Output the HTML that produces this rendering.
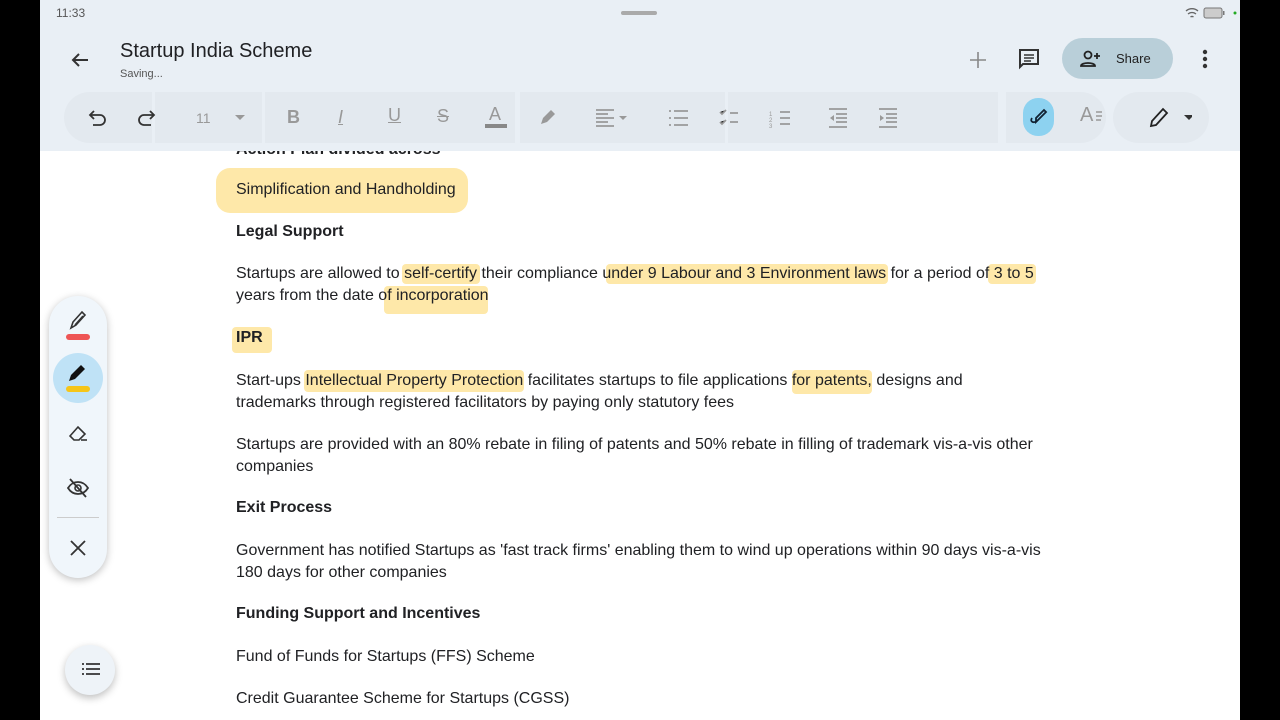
<!DOCTYPE html>
<html><head><style>
body{margin:0;width:1280px;height:720px;background:#000;position:relative;overflow:hidden;font-family:"Liberation Sans",Arial,sans-serif}
.app{position:absolute;left:40px;top:0;width:1200px;height:720px;background:#fff;overflow:hidden}
.hdr{position:absolute;left:0;top:0;width:1200px;height:151px;background:#e9eff5;z-index:2}
.t{position:absolute;white-space:nowrap}
.grp{position:absolute;top:92px;height:51px;background:#e3e9ef}
.doc{position:absolute;left:196px;font-size:16px;color:#202124;white-space:nowrap}
.hl{position:absolute;background:rgba(253,214,99,.55);border-radius:4px}
.ic{position:absolute}
</style></head><body>
<div class="app">
<div class="doc" style="top:141px;font-weight:bold">Action Plan divided across</div>
<div class="hdr">
<div class="t" style="left:16px;top:6px;font-size:12px;color:#555">11:33</div>
<div style="position:absolute;left:581px;top:11px;width:36px;height:4px;border-radius:2px;background:#aaa"></div>
<svg class="ic" style="left:1144px;top:6px" width="60" height="14"><path d="M2 5a9 9 0 0 1 12 0M4 8a6 6 0 0 1 8 0M6.5 11a2.5 2.5 0 0 1 3 0" stroke="#666" fill="none" stroke-width="1.3"/><rect x="20" y="2" width="18" height="10" rx="2" fill="#ccc" stroke="#777"/><rect x="39" y="5" width="1.5" height="4" fill="#777"/><circle cx="51" cy="7" r="1.5" fill="#2a2"/></svg>
<svg class="ic" style="left:28px;top:48px" width="24" height="24"><path d="M20 12H5M11 6l-6 6 6 6" stroke="#333" stroke-width="2" fill="none"/></svg>
<div class="t" style="left:80px;top:40px;font-size:20px;color:#202124">Startup India Scheme</div>
<div class="t" style="left:80px;top:68px;font-size:11px;color:#555">Saving...</div>
<svg class="ic" style="left:926px;top:48px" width="24" height="24"><path d="M12 4v16M4 12h16" stroke="#888" stroke-width="1.6"/></svg>
<svg class="ic" style="left:977px;top:47px" width="24" height="24"><path d="M3 3h18v14H6l-3 3z" stroke="#333" stroke-width="2" fill="none"/><path d="M7 8h10M7 11h10M7 14h7" stroke="#333" stroke-width="1.6"/></svg>
<div style="position:absolute;left:1022px;top:38px;width:111px;height:41px;border-radius:21px;background:#b9cfd9"></div>
<svg class="ic" style="left:1040px;top:49px" width="22" height="20"><circle cx="8" cy="6" r="3.5" stroke="#222" stroke-width="1.8" fill="none"/><path d="M1 17c0-4 14-4 14 0z" stroke="#222" stroke-width="1.8" fill="none"/><path d="M17 4v6M14 7h6" stroke="#222" stroke-width="1.8"/></svg>
<div class="t" style="left:1076px;top:51px;font-size:13px;color:#222">Share</div>
<svg class="ic" style="left:1160px;top:48px" width="10" height="22"><circle cx="5" cy="4" r="2.2" fill="#333"/><circle cx="5" cy="11" r="2.2" fill="#333"/><circle cx="5" cy="18" r="2.2" fill="#333"/></svg>
<div class="grp" style="left:24px;width:88px;border-radius:26px 0 0 26px"></div>
<div class="grp" style="left:115px;width:107px"></div>
<div class="grp" style="left:225px;width:250px"></div>
<div class="grp" style="left:480px;width:70px"></div>
<div class="grp" style="left:549px;width:136px"></div>
<div class="grp" style="left:688px;width:270px"></div>
<div class="grp" style="left:966px;width:100px;border-radius:0 26px 26px 0"></div>
<div class="grp" style="left:1073px;width:96px;border-radius:26px"></div>
<svg class="ic" style="left:48px;top:107px" width="120" height="22"><path d="M6 4L2 8l4 4M2 8h10a5 5 0 0 1 0 10H5" stroke="#333" stroke-width="1.8" fill="none"/><path d="M62 4l4 4-4 4M66 8H56a5 5 0 0 0 0 10h7" stroke="#333" stroke-width="1.8" fill="none"/></svg>
<div class="t" style="left:156px;top:110px;font-size:14px;color:#999">11</div>
<svg class="ic" style="left:194px;top:114px" width="12" height="8"><path d="M1 1h10L6 6z" fill="#999"/></svg>
<div class="t" style="left:247px;top:107px;font-size:18px;font-weight:bold;color:#999">B</div>
<div class="t" style="left:298px;top:107px;font-size:18px;font-style:italic;color:#999;text-decoration:underline">I</div>
<div class="t" style="left:348px;top:105px;font-size:18px;color:#999;text-decoration:underline">U</div>
<div class="t" style="left:397px;top:106px;font-size:18px;color:#999;text-decoration:line-through">S</div>
<div class="t" style="left:449px;top:104px;font-size:18px;color:#999">A</div>
<div style="position:absolute;left:445px;top:124px;width:22px;height:4px;background:#888"></div>
<svg class="ic" style="left:497px;top:106px" width="22" height="22"><path d="M4 18l2-6 8-8 4 4-8 8z" fill="#999"/></svg>
<svg class="ic" style="left:555px;top:108px" width="40" height="20"><path d="M1 2h18M1 6h12M1 10h18M1 14h12M1 18h18" stroke="#999" stroke-width="1.8"/><path d="M24 8h8l-4 4z" fill="#999"/></svg>
<svg class="ic" style="left:628px;top:108px" width="180" height="20"><g stroke="#999" stroke-width="1.8"><path d="M6 3h14M6 10h14M6 17h14"/><path d="M1 3h2M1 10h2M1 17h2"/><path d="M52 4l2 2 4-4M52 14l2 2 4-4M62 5h8M62 14h8"/><path d="M112 4h10M112 10h10M112 16h10"/></g><text x="101" y="8" font-size="6" fill="#999">1</text><text x="101" y="14" font-size="6" fill="#999">2</text><text x="101" y="20" font-size="6" fill="#999">3</text></svg>
<svg class="ic" style="left:788px;top:107px" width="120" height="22"><g stroke="#999" stroke-width="1.8"><path d="M1 2h18M8 7h11M8 11h11M8 15h11M1 20h18M51 2h18M58 7h11M58 11h11M58 15h11M51 20h18"/></g><path d="M6 8l-4 3 4 3z" fill="#999"/><path d="M52 8l4 3-4 3z" fill="#999"/></svg>
<div style="position:absolute;left:983px;top:98px;width:31px;height:38px;border-radius:15px;background:#8dd2f0"></div>
<svg class="ic" style="left:987px;top:106px" width="24" height="22"><path d="M5 12c-3 4 3 6 5 2M9 16l2-2 8-8-2-2-8 8z" stroke="#123" stroke-width="1.8" fill="none"/></svg>
<div class="t" style="left:1040px;top:104px;font-size:20px;color:#999">A</div>
<svg class="ic" style="left:1055px;top:110px" width="8" height="14"><path d="M1 2h6M1 6h6M1 10h5" stroke="#999" stroke-width="1.5"/></svg>
<svg class="ic" style="left:1108px;top:106px" width="44" height="22"><path d="M3 20l1-5 11-12 4 4-11 12z" stroke="#222" stroke-width="1.8" fill="none"/><path d="M36 9h10l-5 5z" fill="#333"/></svg>
</div>

<div class="hl" style="left:176px;top:168px;width:252px;height:45px;border-radius:14px"></div>
<div class="hl" style="left:362px;top:264px;width:78px;height:20px"></div>
<div class="hl" style="left:566px;top:264px;width:282px;height:20px"></div>
<div class="hl" style="left:948px;top:264px;width:48px;height:20px"></div>
<div class="hl" style="left:344px;top:286px;width:104px;height:28px"></div>
<div class="hl" style="left:192px;top:327px;width:40px;height:26px"></div>
<div class="hl" style="left:264px;top:370px;width:220px;height:22px"></div>
<div class="hl" style="left:752px;top:370px;width:80px;height:24px"></div>
<div class="doc" style="top:181px">Simplification and Handholding</div>
<div class="doc" style="top:223px;font-weight:bold">Legal Support</div>
<div class="doc" style="top:265px">Startups are allowed to self-certify their compliance under 9 Labour and 3 Environment laws for a period of 3 to 5</div>
<div class="doc" style="top:287px">years from the date of incorporation</div>
<div class="doc" style="top:329px;font-weight:bold">IPR</div>
<div class="doc" style="top:372px">Start-ups Intellectual Property Protection facilitates startups to file applications for patents, designs and</div>
<div class="doc" style="top:394px">trademarks through registered facilitators by paying only statutory fees</div>
<div class="doc" style="top:436px">Startups are provided with an 80% rebate in filing of patents and 50% rebate in filling of trademark vis-a-vis other</div>
<div class="doc" style="top:458px">companies</div>
<div class="doc" style="top:499px;font-weight:bold">Exit Process</div>
<div class="doc" style="top:542px">Government has notified Startups as 'fast track firms' enabling them to wind up operations within 90 days vis-a-vis</div>
<div class="doc" style="top:564px">180 days for other companies</div>
<div class="doc" style="top:605px;font-weight:bold">Funding Support and Incentives</div>
<div class="doc" style="top:648px">Fund of Funds for Startups (FFS) Scheme</div>
<div class="doc" style="top:690px">Credit Guarantee Scheme for Startups (CGSS)</div>

<div style="position:absolute;left:9px;top:296px;width:58px;height:282px;border-radius:29px;background:#f0f6fb;box-shadow:0 2px 8px rgba(0,0,0,.25)"></div>
<svg class="ic" style="left:26px;top:308px" width="24" height="36"><path d="M5 20l2-6 9-10 3 3-9 10zM9 17l8-9" stroke="#333" stroke-width="1.6" fill="none"/><rect x="0" y="26" width="24" height="6" rx="3" fill="#e55"/></svg>
<div style="position:absolute;left:13px;top:353px;width:50px;height:50px;border-radius:25px;background:#bfe2f6"></div>
<svg class="ic" style="left:26px;top:362px" width="24" height="34"><path d="M3 19l2-6 10-10 4 4-10 10z" fill="#111"/><rect x="0" y="24" width="24" height="6" rx="3" fill="#f5c518"/></svg>
<svg class="ic" style="left:27px;top:422px" width="24" height="24"><path d="M3 14l8-9 7 7-6 6H7z" stroke="#333" stroke-width="1.6" fill="none"/><path d="M14 18h6" stroke="#333" stroke-width="1.6"/></svg>
<svg class="ic" style="left:26px;top:476px" width="24" height="24"><path d="M2 12c5-8 15-8 20 0-5 8-15 8-20 0z" stroke="#333" stroke-width="1.8" fill="none"/><circle cx="12" cy="12" r="3" stroke="#333" stroke-width="1.6" fill="none"/><path d="M4 3l16 18" stroke="#333" stroke-width="1.8"/></svg>
<div style="position:absolute;left:17px;top:517px;width:42px;height:1px;background:#ccc"></div>
<svg class="ic" style="left:29px;top:539px" width="18" height="18"><path d="M2 2l14 14M16 2L2 16" stroke="#333" stroke-width="1.8"/></svg>
<div style="position:absolute;left:25px;top:645px;width:50px;height:50px;border-radius:25px;background:#eef3f8;box-shadow:0 3px 8px rgba(0,0,0,.25)"></div>
<svg class="ic" style="left:41px;top:662px" width="20" height="16"><path d="M5 2h14M5 7h14M5 12h14M1 2h2M1 7h2M1 12h2" stroke="#333" stroke-width="1.8"/></svg>
</div>
</body></html>
